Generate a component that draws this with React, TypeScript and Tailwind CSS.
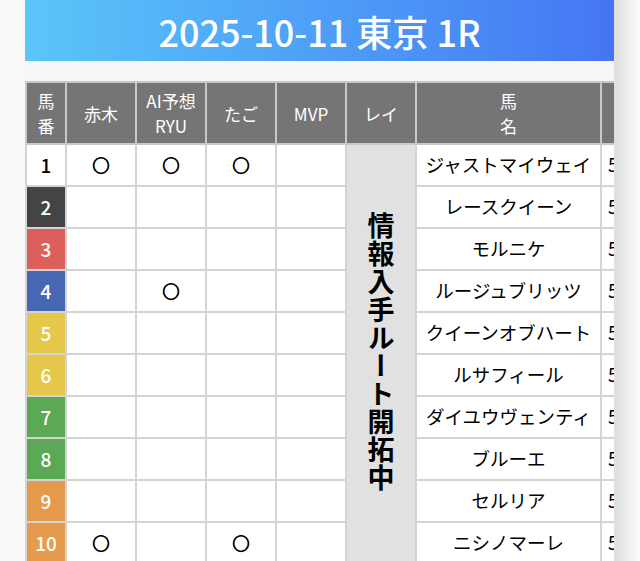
const font = { fontFamily: '"Noto Sans CJK JP", "Noto Sans", sans-serif' }

type Row = { no: number; frame: string; akagi?: boolean; ai?: boolean; tago?: boolean; mvp?: boolean; name: string; kin: string }

const frames: Record<number, string> = {
  1: 'bg-white text-black',
  2: 'bg-[#444444] text-white',
  3: 'bg-[#dc5f5c] text-white',
  4: 'bg-[#4767b4] text-white',
  5: 'bg-[#e5c84a] text-white',
  6: 'bg-[#5ba955] text-white',
  7: 'bg-[#e59a4c] text-white',
}

const rows: Row[] = [
  { no: 1, frame: frames[1], akagi: true, ai: true, tago: true, name: 'ジャストマイウェイ', kin: '55' },
  { no: 2, frame: frames[2], name: 'レースクイーン', kin: '55' },
  { no: 3, frame: frames[3], name: 'モルニケ', kin: '55' },
  { no: 4, frame: frames[4], ai: true, name: 'ルージュブリッツ', kin: '55' },
  { no: 5, frame: frames[5], name: 'クイーンオブハート', kin: '55' },
  { no: 6, frame: frames[5], name: 'ルサフィール', kin: '55' },
  { no: 7, frame: frames[6], name: 'ダイユウヴェンティ', kin: '55' },
  { no: 8, frame: frames[6], name: 'ブルーエ', kin: '55' },
  { no: 9, frame: frames[7], name: 'セルリア', kin: '55' },
  { no: 10, frame: frames[7], akagi: true, tago: true, name: 'ニシノマーレ', kin: '55' },
]

/* ── Header cell ── */

function Th({ children }: { children: React.ReactNode }) {
  return (
    <th className="border-2 border-[#c8c8c8] bg-[#757575] p-0 text-center align-middle text-[17px] font-normal leading-[25px] text-white">
      {children}
    </th>
  )
}

function Mark({ on }: { on?: boolean }) {
  return (
    <td className="border-2 border-[#d4d4d4] bg-white p-0 text-center align-middle text-[17px] text-black [-webkit-text-stroke:1px_black]">
      {on ? '○' : ''}
    </td>
  )
}

export default function App() {
  return (
    <div className="flex h-[561px] w-[640px] overflow-hidden bg-[#f7f7f7]" style={font}>
      <div className="w-[25px] shrink-0 bg-[#fafafa]" />

      <div className="flex w-[589px] shrink-0 flex-col overflow-hidden">
        <div className="flex h-[61px] shrink-0 items-center justify-center bg-linear-to-r from-[#5bc6f9] to-[#4675f3]">
          <h1 className="text-[36px] font-medium leading-none text-white">2025-10-11 東京 1R</h1>
        </div>

        <div className="mt-[20px] bg-[#f6f6f6]">
          <table className="w-[664px] table-fixed border-collapse">
            <colgroup>
              <col className="w-[40px]" />
              <col className="w-[70px]" />
              <col className="w-[70px]" />
              <col className="w-[70px]" />
              <col className="w-[70px]" />
              <col className="w-[70px]" />
              <col className="w-[185px]" />
              <col className="w-[89px]" />
            </colgroup>
            <thead>
              <tr className="h-[62px]">
                <Th>
                  馬<br />番
                </Th>
                <Th>赤木</Th>
                <Th>
                  AI予想
                  <br />
                  RYU
                </Th>
                <Th>たご</Th>
                <Th>MVP</Th>
                <Th>レイ</Th>
                <Th>
                  馬<br />名
                </Th>
                <Th>斤量</Th>
              </tr>
            </thead>
            <tbody>
              {rows.map((r, i) => (
                <tr key={r.no} className="h-[42px]">
                  <td
                    className={`border-2 border-[#d4d4d4] p-0 text-center align-middle text-[19px] font-medium ${r.frame}`}
                  >
                    {r.no}
                  </td>
                  <Mark on={r.akagi} />
                  <Mark on={r.ai} />
                  <Mark on={r.tago} />
                  <Mark on={r.mvp} />
                  {i === 0 && (
                    <td
                      rowSpan={10}
                      className="border-2 border-[#d4d4d4] bg-[#e1e1e1] p-0 text-center align-middle"
                    >
                      <span className="inline-block text-[27px] font-bold leading-none tracking-[1px] text-black [writing-mode:vertical-rl]">
                        情報入手ルート開拓中
                      </span>
                    </td>
                  )}
                  <td className="border-2 border-[#d4d4d4] bg-white p-0 text-center align-middle text-[18.5px] text-black">
                    {r.name}
                  </td>
                  <td className="border-2 border-[#d4d4d4] bg-white py-0 pl-[6px] text-left align-middle text-[18.5px] text-black">
                    {r.kin}
                  </td>
                </tr>
              ))}
            </tbody>
          </table>
        </div>
      </div>

      <div className="w-[26px] shrink-0 bg-linear-to-r from-[#dedede] via-[#ededed] to-[#fafafa]" />
    </div>
  )
}
